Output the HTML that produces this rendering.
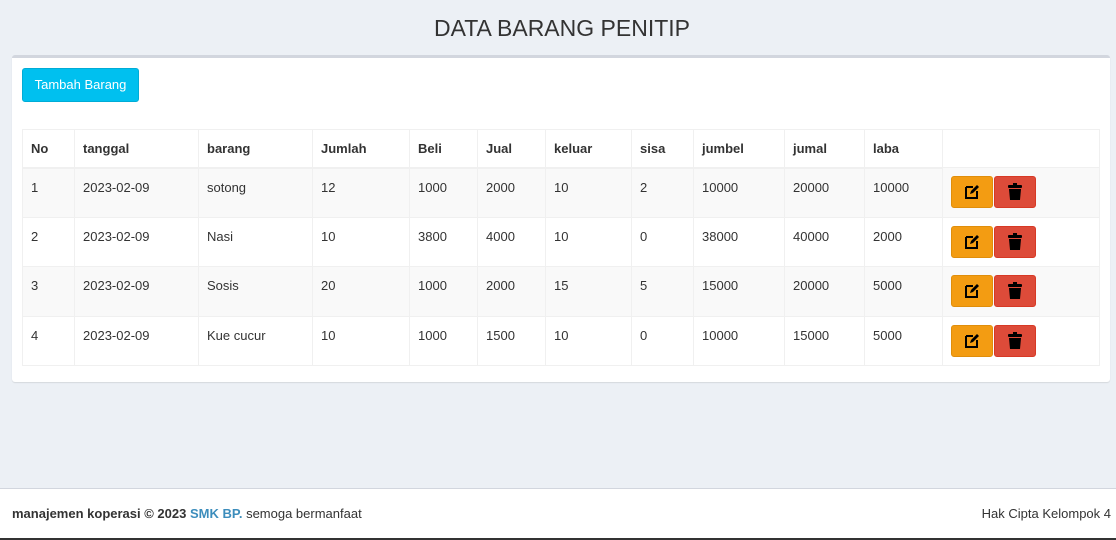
<!DOCTYPE html>
<html><head><style>
*{box-sizing:border-box;margin:0;padding:0}
body{width:1116px;height:540px;background:#ecf0f5;font-family:"Source Sans Pro","Liberation Sans",sans-serif;font-size:13px;color:#333;position:relative;overflow:hidden}
h1{position:absolute;top:15px;left:0;width:1124px;text-align:center;font-weight:400;font-size:23px;color:#333}
.box{position:absolute;left:12px;top:55px;width:1098px;height:327px;background:#fff;border-top:3px solid #d2d6de;border-radius:3px;box-shadow:0 1px 1px rgba(0,0,0,.1)}
.btn{position:absolute;left:10px;top:10px;width:117px;height:34px;background:#00c0ef;border:1px solid #00acd6;border-radius:3px;color:#fff;font-size:13px;line-height:32px;text-align:center}
table{position:absolute;left:10px;top:71px;border-collapse:collapse;width:1078px}
td,th{border:1px solid #f0f0f0;text-align:left;padding:0 8px;font-size:13px}
th{height:38px;font-weight:700;border-bottom:2px solid #f0f0f0;padding-top:1px}
td{height:49.5px;vertical-align:top;padding-top:11px}
td:last-child{padding-top:8px}
tbody tr:nth-child(odd){background:#f9f9f9}
.a{display:inline-block;width:42px;height:32px;border-radius:3px;vertical-align:middle;position:relative}
.e{background:#f39c12;border:1px solid #e08e0b}
.d{background:#dd4b39;border:1px solid #d73925;margin-left:1px}
.a svg{position:absolute;left:12px;top:7px}
.foot{position:absolute;left:0;top:488px;width:1116px;height:52px;background:#fff;border-top:1px solid #d2d6de;border-bottom:2px solid #333;font-size:13px;line-height:50px;padding:0 12px}
.foot b a{color:#3c8dbc}
.r{position:absolute;right:5px;top:0}
</style></head><body>
<h1>DATA BARANG PENITIP</h1>
<div class="box">
<div class="btn">Tambah Barang</div>
<table>
<colgroup><col style="width:52px"><col style="width:124px"><col style="width:114px"><col style="width:97px"><col style="width:68px"><col style="width:68px"><col style="width:86px"><col style="width:62px"><col style="width:91px"><col style="width:80px"><col style="width:78px"><col></colgroup>
<thead><tr><th>No</th><th>tanggal</th><th>barang</th><th>Jumlah</th><th>Beli</th><th>Jual</th><th>keluar</th><th>sisa</th><th>jumbel</th><th>jumal</th><th>laba</th><th style="border-bottom:none"></th></tr></thead>
<tbody>
<tr><td>1</td><td>2023-02-09</td><td>sotong</td><td>12</td><td>1000</td><td>2000</td><td>10</td><td>2</td><td>10000</td><td>20000</td><td>10000</td><td><span class="a e"><svg width="16" height="16" viewBox="0 0 16 16"><path d="M2 3h7M2 3v11h11V7" fill="none" stroke="#000" stroke-width="2"/><path d="M6 10l1-3 6-6 2 2-6 6z" fill="#000"/></svg></span><span class="a d"><svg width="16" height="18" viewBox="0 0 16 18" style="top:6px"><rect x="6" y="0" width="4" height="2" fill="#000"/><rect x="1" y="2" width="14" height="3" rx="1" fill="#000"/><path d="M2 6h12l-1 11H3z" fill="#000"/></svg></span></td></tr>
<tr><td>2</td><td>2023-02-09</td><td>Nasi</td><td>10</td><td>3800</td><td>4000</td><td>10</td><td>0</td><td>38000</td><td>40000</td><td>2000</td><td><span class="a e"><svg width="16" height="16" viewBox="0 0 16 16"><path d="M2 3h7M2 3v11h11V7" fill="none" stroke="#000" stroke-width="2"/><path d="M6 10l1-3 6-6 2 2-6 6z" fill="#000"/></svg></span><span class="a d"><svg width="16" height="18" viewBox="0 0 16 18" style="top:6px"><rect x="6" y="0" width="4" height="2" fill="#000"/><rect x="1" y="2" width="14" height="3" rx="1" fill="#000"/><path d="M2 6h12l-1 11H3z" fill="#000"/></svg></span></td></tr>
<tr><td>3</td><td>2023-02-09</td><td>Sosis</td><td>20</td><td>1000</td><td>2000</td><td>15</td><td>5</td><td>15000</td><td>20000</td><td>5000</td><td><span class="a e"><svg width="16" height="16" viewBox="0 0 16 16"><path d="M2 3h7M2 3v11h11V7" fill="none" stroke="#000" stroke-width="2"/><path d="M6 10l1-3 6-6 2 2-6 6z" fill="#000"/></svg></span><span class="a d"><svg width="16" height="18" viewBox="0 0 16 18" style="top:6px"><rect x="6" y="0" width="4" height="2" fill="#000"/><rect x="1" y="2" width="14" height="3" rx="1" fill="#000"/><path d="M2 6h12l-1 11H3z" fill="#000"/></svg></span></td></tr>
<tr><td>4</td><td>2023-02-09</td><td>Kue cucur</td><td>10</td><td>1000</td><td>1500</td><td>10</td><td>0</td><td>10000</td><td>15000</td><td>5000</td><td><span class="a e"><svg width="16" height="16" viewBox="0 0 16 16"><path d="M2 3h7M2 3v11h11V7" fill="none" stroke="#000" stroke-width="2"/><path d="M6 10l1-3 6-6 2 2-6 6z" fill="#000"/></svg></span><span class="a d"><svg width="16" height="18" viewBox="0 0 16 18" style="top:6px"><rect x="6" y="0" width="4" height="2" fill="#000"/><rect x="1" y="2" width="14" height="3" rx="1" fill="#000"/><path d="M2 6h12l-1 11H3z" fill="#000"/></svg></span></td></tr>
</tbody></table>
</div>
<div class="foot"><b>manajemen koperasi © 2023 <a>SMK BP.</a></b> semoga bermanfaat<span class="r">Hak Cipta Kelompok 4</span></div>
</body></html>
